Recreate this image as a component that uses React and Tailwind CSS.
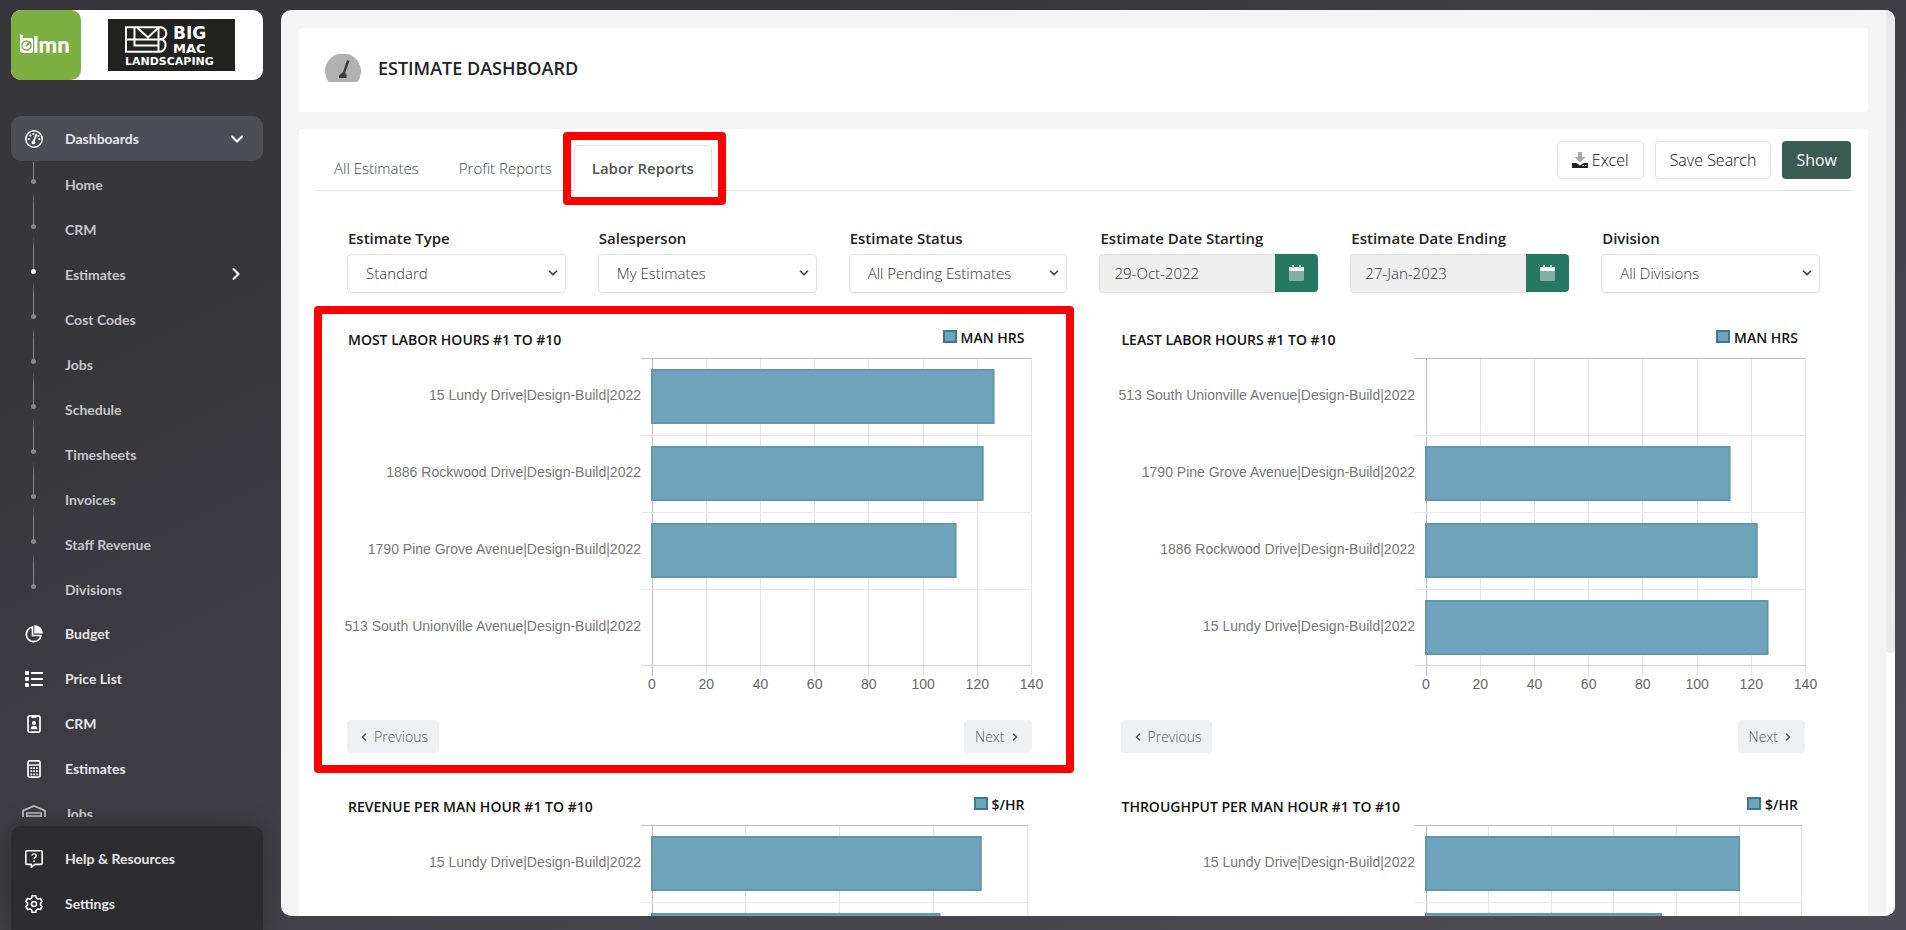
import { ChevronDown, ChevronLeft, ChevronRight } from 'lucide-react'

const subItems = [
  'Home',
  'CRM',
  'Estimates',
  'Cost Codes',
  'Jobs',
  'Schedule',
  'Timesheets',
  'Invoices',
  'Staff Revenue',
  'Divisions',
]

const jobs = {
  lundy: '15 Lundy Drive|Design-Build|2022',
  rockwood: '1886 Rockwood Drive|Design-Build|2022',
  pine: '1790 Pine Grove Avenue|Design-Build|2022',
  union: '513 South Unionville Avenue|Design-Build|2022',
}

const hourTicks = ['0', '20', '40', '60', '80', '100', '120', '140']

// bar values are in the units of the axis, max is the value of the last grid line
const charts = [
  {
    title: 'MOST LABOR HOURS #1 TO #10',
    legend: 'MAN HRS',
    ticks: hourTicks,
    max: 140,
    span: 100,
    highlight: true,
    rows: [[jobs.lundy, 126], [jobs.rockwood, 122], [jobs.pine, 112], [jobs.union, 0]],
  },
  {
    title: 'LEAST LABOR HOURS #1 TO #10',
    legend: 'MAN HRS',
    ticks: hourTicks,
    max: 140,
    span: 100,
    rows: [[jobs.union, 0], [jobs.pine, 112], [jobs.rockwood, 122], [jobs.lundy, 126]],
  },
  {
    title: 'REVENUE PER MAN HOUR #1 TO #10',
    legend: '$/HR',
    ticks: ['0', '50', '100', '150', '200'],
    max: 200,
    span: 99,
    rows: [[jobs.lundy, 175], [jobs.rockwood, 153], [jobs.pine, 140], [jobs.union, 0]],
  },
  {
    title: 'THROUGHPUT PER MAN HOUR #1 TO #10',
    legend: '$/HR',
    ticks: ['0', '20', '40', '60', '80', '100', '120'],
    max: 120,
    span: 99,
    rows: [[jobs.lundy, 100], [jobs.rockwood, 75], [jobs.pine, 70], [jobs.union, 0]],
  },
]

const ROW = 77

function DashIcon() {
  return (
    <svg width="18" height="18" viewBox="0 0 18 18" fill="none" stroke="white">
      <circle cx="9" cy="9" r="8.2" strokeWidth="1.6" />
      <path d="M8.6 12 11.2 4.6" strokeWidth="1.8" strokeLinecap="round" />
      <circle cx="8.4" cy="12.4" r="1.9" fill="white" stroke="none" />
      <g fill="white" stroke="none">
        <circle cx="3.8" cy="9" r="1.1" />
        <circle cx="5.4" cy="5.6" r="1.1" />
        <circle cx="8.4" cy="4" r="1.1" />
        <circle cx="13.4" cy="5.8" r="1.1" />
        <circle cx="14.2" cy="9" r="1.1" />
      </g>
    </svg>
  )
}

function PieIcon() {
  return (
    <svg width="18" height="18" viewBox="0 0 18 18" fill="none">
      <path d="M7.5 2A7.4 7.4 0 1 0 16 10.5H7.5Z" stroke="white" strokeWidth="1.7" />
      <path d="M9.3 0A8.7 8.7 0 0 1 18 8.6H9.3Z" fill="white" />
    </svg>
  )
}

function ListIcon() {
  return (
    <svg width="18" height="16" viewBox="0 0 18 16" fill="white">
      <rect x="0" y="0" width="4" height="4" rx="1" />
      <rect x="0" y="6" width="4" height="4" rx="1" />
      <rect x="0" y="12" width="4" height="4" rx="1" />
      <rect x="6" y="1" width="12" height="2" />
      <rect x="6" y="7" width="12" height="2" />
      <rect x="6" y="13" width="12" height="2" />
    </svg>
  )
}

function BadgeIcon() {
  return (
    <svg width="14" height="18" viewBox="0 0 14 18" fill="none">
      <rect x="1" y="0.8" width="12" height="16.4" rx="1.8" stroke="white" strokeWidth="1.7" />
      <rect x="4.6" y="1" width="4.8" height="2" fill="white" />
      <circle cx="7" cy="8" r="2" fill="white" />
      <path d="M3.6 14.2c0-2.6 1.4-3.4 3.4-3.4s3.4.8 3.4 3.4Z" fill="white" />
    </svg>
  )
}

function CalcIcon() {
  return (
    <svg width="14" height="18" viewBox="0 0 14 18" fill="none">
      <rect x="1" y="0.8" width="12" height="16.4" rx="1.8" stroke="white" strokeWidth="1.7" />
      <path d="M1.5 5h11" stroke="white" strokeWidth="1.4" />
      <path d="M3.4 8.2h7.4M3.4 11.2h7.4M3.4 14.3h4.6M9.2 14.3h1.6" stroke="white" strokeWidth="1.8" strokeDasharray="1.8 1" />
    </svg>
  )
}

function GarageIcon() {
  return (
    <svg width="24" height="18" viewBox="0 0 24 18" fill="none" stroke="#d8d8da" strokeWidth="1.7">
      <path d="M1 18V5.6L12 1l11 4.6V18" />
      <path d="M4.8 18V8h14.4v10M5 11h14M5 14h14" strokeWidth="1.5" />
    </svg>
  )
}

function HelpIcon() {
  return (
    <svg width="18" height="18" viewBox="0 0 18 18" fill="none" stroke="white">
      <path d="M2 .8h14A1.2 1.2 0 0 1 17.2 2v11.2a1.2 1.2 0 0 1-1.2 1.2H10L6.4 17.2v-2.8H2A1.2 1.2 0 0 1 .8 13.2V2A1.2 1.2 0 0 1 2 .8Z" strokeWidth="1.6" strokeLinejoin="round" />
      <path d="M6.8 5.6C7 4.4 8 3.9 9 3.9c1.3 0 2.2.8 2.2 1.9C11.2 7.3 9 7.4 9 9" strokeWidth="1.4" />
      <circle cx="9" cy="11.2" r=".9" fill="white" stroke="none" />
    </svg>
  )
}

function GearIcon() {
  return (
    <svg width="18" height="18" viewBox="0 0 18 18" fill="none" stroke="white" strokeWidth="1.6" strokeLinejoin="round">
      <path d="M7.2.8h3.6l.6 2.3 1.7 1 2.3-.7 1.8 3.1-1.7 1.6v1.8l1.7 1.6-1.8 3.1-2.3-.7-1.7 1-.6 2.3H7.2l-.6-2.3-1.7-1-2.3.7L.8 11.5l1.7-1.6V8.1L.8 6.5l1.8-3.1 2.3.7 1.7-1Z" />
      <circle cx="9" cy="9" r="2.5" />
    </svg>
  )
}

function Brand() {
  return (
    <div className="flex h-[70px] shrink-0 rounded-[10px] bg-white">
      <div className="flex w-[70px] items-center justify-center rounded-[10px] bg-[#7cb043]">
        <svg width="60" height="40" viewBox="0 0 60 40">
          <path d="M4 9l3 1.5V13h8a2 2 0 0 1 2 2v11a2 2 0 0 1-2 2H6a2 2 0 0 1-2-2Z" fill="white" />
          <circle cx="10.5" cy="20.5" r="4.6" fill="none" stroke="#7cb043" strokeWidth="1.5" />
          <path d="M10 21 14 17" stroke="#7cb043" strokeWidth="1.8" />
          <text x="17" y="28" fill="white" className="font-['Lato'] text-[22px] font-black">lmn</text>
        </svg>
      </div>
      <div className="flex flex-1 items-center justify-center pr-[2px]">
        <svg width="127" height="52" viewBox="0 0 127 52">
          <rect width="127" height="52" fill="#222221" />
          <g fill="none" stroke="white" strokeWidth="2">
            <path d="M18 8.3h33a5.8 5.8 0 0 1 2.5 11.9a6.5 6.5 0 0 1-2.5 12.5H18Z" />
            <path d="M18 20.5h36M26.5 8.5v18h24M50.5 8.5v24M29.5 9 40 18.5 50 9" />
          </g>
          <g fill="white" className="font-['DejaVu_Sans'] font-bold">
            <text x="65" y="20" className="text-[17px]">BIG</text>
            <text x="65" y="34" className="text-[13px]">MAC</text>
            <text x="17" y="46" className="text-[11px]">LANDSCAPING</text>
          </g>
        </svg>
      </div>
    </div>
  )
}

function NavItem({ icon, label }) {
  return (
    <a href="#" className="flex h-[45px] items-center text-[#e6e6e8]">
      <span className="flex w-[46px] justify-center">{icon}</span>
      <span className="ml-2 pb-px">{label}</span>
    </a>
  )
}

function SubItem({ label, first }) {
  const active = label === 'Estimates'
  return (
    <a href="#" className="relative flex h-[45px] items-center pb-px pl-[54px] text-[#c6c6c8]">
      <span
        className={
          first
            ? 'absolute top-0 left-[22px] h-[18px] w-px bg-[#88878b]'
            : 'absolute -top-4 left-[22px] h-[34px] w-px bg-linear-to-b from-transparent to-[#88878b] to-40%'
        }
      />
      <span className={`absolute top-[17px] left-5 size-[5px] rounded-full ${active ? 'bg-white' : 'bg-[#88878b]'}`} />
      {label}
      {active && <ChevronRight size={20} strokeWidth={2.5} className="absolute top-3 right-[17px] text-white" />}
    </a>
  )
}

function Sidebar() {
  return (
    <aside className="flex w-[281px] shrink-0 flex-col pt-[10px] pr-[18px] pl-[11px] font-['Lato',sans-serif] text-[14px] font-bold">
      <Brand />
      <nav className="mt-9 min-h-0 flex-1 overflow-hidden">
        <a href="#" className="flex h-[45px] items-center rounded-[10px] bg-[#4c4e56] text-[#e6e6e8]">
          <span className="flex w-[46px] justify-center"><DashIcon /></span>
          <span className="ml-2 flex-1 pb-px">Dashboards</span>
          <ChevronDown size={20} strokeWidth={2.5} className="mr-4 text-white" />
        </a>
        <div className="mt-px -mb-px">
          {subItems.map((s, i) => (
            <SubItem key={s} label={s} first={i === 0} />
          ))}
        </div>
        <NavItem icon={<PieIcon />} label="Budget" />
        <NavItem icon={<ListIcon />} label="Price List" />
        <NavItem icon={<BadgeIcon />} label="CRM" />
        <NavItem icon={<CalcIcon />} label="Estimates" />
        <div className="opacity-80"><NavItem icon={<GarageIcon />} label="Jobs" /></div>
      </nav>
      <div className="mt-[9px] h-[104px] shrink-0 rounded-t-[10px] bg-[#2d2d2f] pt-[10px] shadow-[0_0_24px_rgba(0,0,0,0.25)]">
        <NavItem icon={<HelpIcon />} label="Help & Resources" />
        <NavItem icon={<GearIcon />} label="Settings" />
      </div>
    </aside>
  )
}

function SelectField({ id, label, value }) {
  return (
    <div className="px-4">
      <label htmlFor={id} className="mb-[6px] block pl-px text-[15px] leading-5 font-semibold text-[#222]">{label}</label>
      <div className="relative">
        <select id={id} className="h-[39px] w-full appearance-none rounded border border-[#e2e2e2] bg-white pl-[18px] text-[15px] font-light text-[#333]">
          <option>{value}</option>
        </select>
        <ChevronDown size={14} strokeWidth={3} className="pointer-events-none absolute top-3 right-[6px] text-[#444]" />
      </div>
    </div>
  )
}

function DateField({ id, label, value }) {
  return (
    <div className="px-4">
      <label htmlFor={id} className="mb-[6px] block pl-px text-[15px] leading-5 font-semibold text-[#222]">{label}</label>
      <div className="flex h-[39px]">
        <input
          id={id}
          defaultValue={value}
          className="w-full min-w-0 flex-1 rounded-l border border-r-0 border-[#e2e2e2] bg-[#eee] pl-[14px] text-[15px] font-light text-[#333]"
        />
        <button aria-label={`Pick ${label}`} className="flex h-[38px] w-[43px] items-center justify-center rounded-r bg-[#267862]">
          <svg width="15" height="16" viewBox="0 0 15 16">
            <rect y="2" width="15" height="14" rx="1" fill="#7fb0a2" />
            <rect y="2" width="15" height="4" fill="white" />
            <rect x="3" width="2" height="3" fill="#b5d2ca" />
            <rect x="10" width="2" height="3" fill="#b5d2ca" />
          </svg>
        </button>
      </div>
    </div>
  )
}

function BarChart({ rows, ticks, max, span }) {
  const height = rows.length * ROW
  const pct = (v) => `${(v / max) * span}%`
  const step = max / (ticks.length - 1)
  return (
    <div className="mr-[15px] ml-[305px]">
      <svg width="100%" height="336" className="block overflow-visible font-['Liberation_Sans',sans-serif] text-[14px]">
        {ticks.map((t, i) => (
          <g key={t}>
            <line x1={pct(i * step)} x2={pct(i * step)} y1="0" y2={height + 10} stroke={i === 0 ? '#bdbdbd' : '#e4e4e4'} shapeRendering="crispEdges" />
            <text x={pct(i * step)} y={height + 23} textAnchor="middle" fill="#666">{t}</text>
          </g>
        ))}
        {rows.map(([label, value], i) => (
          <g key={label}>
            <line x1="-11" x2={`${span}%`} y1={i * ROW + 0.5} y2={i * ROW + 0.5} stroke={i === 0 ? '#bdbdbd' : '#e8e8e8'} />
            <text x="-11" y={i * ROW + 42} textAnchor="end" fill="#777">{label}</text>
            {value > 0 && (
              <>
                <rect x="0" y={i * ROW + 11} width={pct(value)} height="55" fill="#6ea5bd" />
                <rect x="0" y={i * ROW + 12} width={pct(value)} height="53" fill="none" stroke="#6296ac" strokeWidth="2" />
              </>
            )}
          </g>
        ))}
        <line x1="-11" x2={`${span}%`} y1={height - 0.5} y2={height - 0.5} stroke="#cfcfcf" />
      </svg>
    </div>
  )
}

function ChartCard({ chart }) {
  const pager = 'flex h-[33px] items-center gap-1 rounded bg-[#eef1f4] px-[11px] text-[14px] font-light text-[#555]'
  return (
    <section className="relative">
      <div className="flex h-[31px] items-start justify-between pr-[22px] pl-px text-[14px] leading-[22px] font-semibold text-[#111]">
        <h2 className="mt-[2px]">{chart.title}</h2>
        <div className="flex items-start gap-1">
          <span className="mt-[3px] h-[13px] w-[14px] border-2 border-[#3d788f] bg-[#6ea5bd]" />
          {chart.legend}
        </div>
      </div>
      <BarChart {...chart} />
      <div className="mt-[26px] flex justify-between pr-[15px]">
        <button className={pager}><ChevronLeft size={12} strokeWidth={3} />Previous</button>
        <button className={pager}>Next<ChevronRight size={12} strokeWidth={3} /></button>
      </div>
      {chart.highlight && (
        <div className="pointer-events-none absolute -top-[21px] -right-[27px] -bottom-5 -left-[33px] rounded border-8 border-[#ff0000]" />
      )}
    </section>
  )
}

function Toolbar() {
  const tab = 'flex h-[46px] items-center border border-transparent px-[17px] font-light text-[#2f4a43]'
  const button = 'h-[38px] rounded border border-[#e2e2e2] bg-white px-[14px] font-light text-[#111]'
  return (
    <div className="flex h-[62px] items-end justify-between border-b border-[#e2e2e2] text-[15px]">
      <div className="-mb-px flex gap-1">
        <button className={tab}>All Estimates</button>
        <button className={tab}>Profit Reports</button>
        <div className="relative">
          <button className="flex h-[46px] items-center rounded-t border border-[#e2e2e2] border-b-white bg-white px-[17px] font-semibold text-[#555]">
            Labor Reports
          </button>
          <div className="pointer-events-none absolute -top-[13px] -right-[14px] -bottom-[14px] -left-[11px] rounded border-8 border-[#ff0000]" />
        </div>
      </div>
      <div className="mt-3 flex gap-[11px] self-start text-[16px]">
        <button className={`${button} flex items-center gap-1`}>
          <svg width="16" height="16" viewBox="0 0 16 16">
            <path d="M6 0h4v5h3.5L8 10.5 2.5 5H6Z" fill="#aaa" />
            <path d="M0 11h4.5L8 13.5 11.5 11H16v5H0Z" fill="#222" />
            <path d="M10.5 13.5h1.5M13 13.5h1.5" stroke="white" />
          </svg>
          Excel
        </button>
        <button className={button}>Save Search</button>
        <button className="h-[38px] rounded bg-[#3a5b52] px-[14px] text-white">Show</button>
      </div>
    </div>
  )
}

export default function App() {
  return (
    <div className="flex h-screen overflow-hidden bg-linear-to-br from-[#37363b] from-20% to-[#4e4d57] font-['Open_Sans',sans-serif]">
      <Sidebar />
      <main className="mt-[10px] mr-[11px] mb-[14px] flex min-w-0 flex-1 overflow-hidden rounded-[10px] bg-[#f4f4f4]">
        <div className="min-w-0 flex-1 overflow-y-auto p-[18px] [scrollbar-width:none]">
          <header className="flex h-[84px] items-center rounded-[3px] bg-white pb-1 pl-[26px]">
            <svg width="36" height="28" viewBox="0 0 36 28">
              <path d="M3.5 28a18 18 0 1 1 29 0Z" fill="#b1b1b1" />
              <path d="M22 6l2.5 1L20 19l1.5 1.5V24H14v-2.5L18 18Z" fill="#3c3c3c" />
            </svg>
            <h1 className="ml-[17px] text-[18px] leading-6 font-semibold text-[#222]">ESTIMATE DASHBOARD</h1>
          </header>
          <div className="mt-[17px] rounded-[3px] bg-white px-[17px] pb-10">
            <Toolbar />
            <div className="mt-[37px] grid grid-cols-6 px-[15px]">
              <SelectField id="type" label="Estimate Type" value="Standard" />
              <SelectField id="person" label="Salesperson" value="My Estimates" />
              <SelectField id="status" label="Estimate Status" value="All Pending Estimates" />
              <DateField id="start" label="Estimate Date Starting" value="29-Oct-2022" />
              <DateField id="end" label="Estimate Date Ending" value="27-Jan-2023" />
              <SelectField id="division" label="Division" value="All Divisions" />
            </div>
            <div className="mt-[34px] grid grid-cols-2 gap-x-[74px] gap-y-[41px] px-[31px]">
              {charts.map((c) => (
                <ChartCard key={c.title} chart={c} />
              ))}
            </div>
          </div>
        </div>
        <div className="w-[9px] shrink-0 bg-white">
          <div className="h-[71%] rounded-b bg-[#eaeaea]" />
        </div>
      </main>
    </div>
  )
}
